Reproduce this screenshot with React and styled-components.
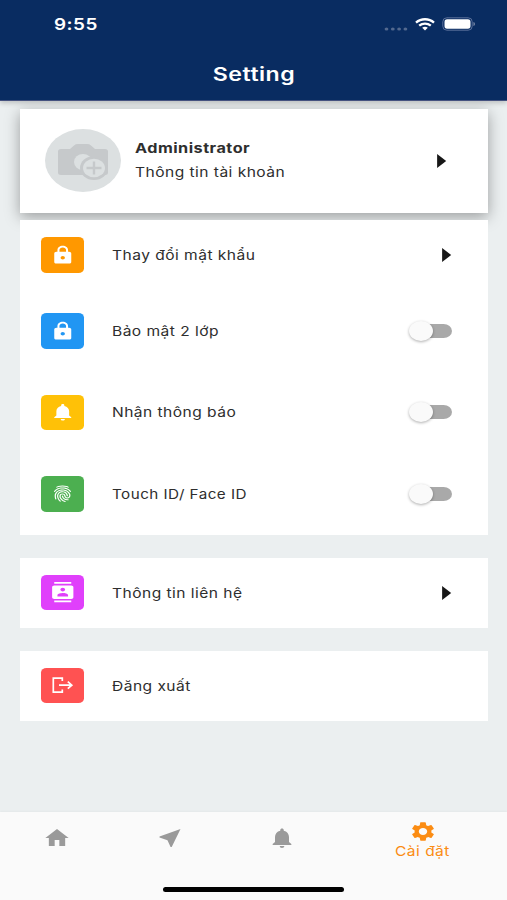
import React from 'react'
import styled, { createGlobalStyle } from 'styled-components'
import {
  MdLock,
  MdNotifications,
  MdContacts,
  MdHome,
  MdNearMe,
  MdSettings
} from 'react-icons/md'
import { IoFingerPrint } from 'react-icons/io5'

const GlobalStyle = createGlobalStyle`
  * { box-sizing: border-box; }
  body {
    margin: 0;
    background: #ebeff0;
    font-family: Inter, "Liberation Sans", sans-serif;
    color: #2e2e2e;
  }
`

const Screen = styled.div`
  width: 507px;
  height: 900px;
  display: flex;
  flex-direction: column;
  overflow: hidden;
`

const Header = styled.header`
  height: 101px;
  flex: none;
  background: #092c61;
  color: #fff;
  position: relative;
  z-index: 2;
  border-bottom: 1px solid #45527f;
  box-shadow: 0 2px 5px rgba(0, 0, 0, 0.2);
`

const StatusBar = styled.div`
  height: 48px;
  display: flex;
  align-items: center;
  justify-content: space-between;
  padding: 0 31px 0 53.5px;
`

const StatusIcons = styled.div`
  display: flex;
  align-items: center;
`

const TitleBar = styled.div`
  height: 52px;
  display: flex;
  align-items: center;
  justify-content: center;
`

const Label = styled.span`
  display: block;
  white-space: nowrap;
  font-size: ${props => props.$size || 13.3}px;
  font-weight: ${props => props.$weight || 400};
  line-height: 20px;
  letter-spacing: ${props => props.$spacing || 0.4}px;
  transform: scaleX(${props => props.$stretch || 1.17});
  transform-origin: ${props => props.$origin || 'left'} center;
`

const Content = styled.main`
  flex: 1;
  padding: 8px 19px 0 20px;
`

const Card = styled.section`
  background: #fff;
  margin-bottom: 23px;
  position: relative;
`

const ProfileCard = styled(Card)`
  height: 103.5px;
  display: flex;
  align-items: center;
  padding: 0 41px 0 25px;
  margin-bottom: 7.5px;
  box-shadow: 0 4px 14px rgba(0, 0, 0, 0.34);
`

const Avatar = styled.svg`
  width: 76px;
  height: 63px;
  flex: none;
`

const ProfileText = styled.div`
  flex: 1;
  margin-left: 14px;
  padding-bottom: 2px;
  display: flex;
  flex-direction: column;
  gap: 4px;
`

const Row = styled.div`
  height: ${props => props.$height || 70}px;
  display: flex;
  align-items: center;
  padding: 0 36.5px 0 21px;
`

const Tile = styled.div`
  width: 43px;
  height: 35.5px;
  border-radius: 5.5px / 4.5px;
  background: ${props => props.$color};
  color: #fff;
  display: flex;
  align-items: center;
  justify-content: center;
  margin-right: 28px;

  svg {
    width: ${props => (props.$small ? 21 : 25.5)}px;
    height: ${props => (props.$small ? 17.5 : 20.3)}px;
  }
`

const RowText = styled.div`
  flex: 1;
`

const Track = styled.div`
  width: 39px;
  height: 14px;
  border-radius: 8.5px / 7px;
  background: #a9a9a9;
  display: flex;
  align-items: center;
`

const Thumb = styled.div`
  width: 24px;
  height: 20px;
  flex: none;
  margin-left: -4px;
  border-radius: 50%;
  background: #fafafa;
  box-shadow: 0 1px 3px rgba(0, 0, 0, 0.32);
`

const Nav = styled.nav`
  height: 88px;
  flex: none;
  background: #fafafa;
  display: grid;
  grid-template-columns: 2fr 2fr 2fr 3fr;
  grid-template-rows: 75px 5px;
  padding-left: 1px;
  box-shadow: 0 -1px 2px rgba(0, 0, 0, 0.03);
`

const NavItem = styled.div`
  display: flex;
  flex-direction: column;
  align-items: center;
  padding-top: ${props => (props.$active ? 8 : 14)}px;
  color: ${props => (props.$active ? '#fb8c13' : '#9a9a9a')};

  svg {
    width: 28px;
    height: ${props => (props.$active ? 23 : 24)}px;
    flex: none;
  }

  span {
    margin-top: -2px;
  }
`

const HomeIndicator = styled.div`
  grid-column: 1 / -1;
  justify-self: center;
  width: 181px;
  height: 5px;
  border-radius: 3px;
  background: #000;
`

const Wifi = () => (
  <svg width="20" height="13" viewBox="0 0 20 13" fill="none" stroke="#fff" strokeWidth="2.3">
    <path d="M1 4.7C6 .1 14 .1 19 4.7" />
    <path d="M4.2 7.7c3.4-2.9 8.2-2.9 11.6 0" />
    <path d="M7.2 9.7c1.7-1.3 3.9-1.3 5.6 0L10 12.4z" fill="#fff" stroke="none" />
  </svg>
)

const Dots = () => (
  <svg width="24" height="4" viewBox="0 0 24 4" fill="#53698f">
    <ellipse cx="2.5" cy="2" rx="1.9" ry="1.6" />
    <ellipse cx="8.8" cy="2" rx="1.9" ry="1.6" />
    <ellipse cx="15.1" cy="2" rx="1.9" ry="1.6" />
    <ellipse cx="21.4" cy="2" rx="1.9" ry="1.6" />
  </svg>
)

const DotsBox = styled.div`
  display: flex;
  padding-top: 9px;
  margin-right: 7px;
`

const BatteryBox = styled.div`
  display: flex;
  margin-left: 7px;
`

const Battery = () => (
  <svg width="34" height="14" viewBox="0 0 34 14">
    <rect x=".8" y=".8" width="29.4" height="12.4" rx="4" fill="none" stroke="#5b709a" strokeWidth="1" />
    <rect x="2.5" y="2.3" width="26" height="9.4" rx="2.6" fill="#fff" />
    <path d="M31.5 5v4c1.8-.5 1.8-3.5 0-4z" fill="#8391ad" />
  </svg>
)

const Arrow = () => (
  <svg width="10" height="14" viewBox="0 0 10 14">
    <path d="M.1 0L9.2 7L.1 14z" fill="#171717" />
  </svg>
)

const Camera = () => (
  <Avatar viewBox="0 0 76 63">
    <ellipse cx="38" cy="31.5" rx="38" ry="31.5" fill="#dce0e1" />
    <path
      d="M16 20h9l4-3.6q1.5-1.4 4-1.4h9q2.5 0 4 1.4L50 20h10q3 0 3 2.5v21q0 2.5-3 2.5H16q-3 0-3-2.5v-21Q13 20 16 20z"
      fill="#c6c9cb"
    />
    <ellipse cx="38" cy="33" rx="9" ry="8" fill="#dce0e1" />
    <ellipse cx="49" cy="39" rx="14" ry="12" fill="#c6c9cb" />
    <ellipse cx="49" cy="39" rx="11" ry="9.3" fill="#dce0e1" />
    <path d="M41.5 39h15M49 32.5v13" stroke="#c6c9cb" strokeWidth="2.4" />
  </Avatar>
)

const Logout = () => (
  <svg viewBox="0 0 25.5 20.3" fill="none" stroke="#fff" strokeWidth="1.7">
    <path d="M12.3 6V3.2H3.3v14h9v-2.8" />
    <path d="M9 10.2h12.3M17.8 6.7l4 3.5-4 3.5" />
  </svg>
)

const Switch = () => (
  <Track>
    <Thumb />
  </Track>
)

const SettingRow = ({ color, icon, small, text, stretch, height, children }) => (
  <Row $height={height}>
    <Tile $color={color} $small={small}>{icon}</Tile>
    <RowText>
      <Label $stretch={stretch}>{text}</Label>
    </RowText>
    {children}
  </Row>
)

const App = () => {
  return (
    <Screen>
      <GlobalStyle />
      <Header>
        <StatusBar>
          <Label $size={16} $weight={600} $stretch={1.18}>9:55</Label>
          <StatusIcons>
            <DotsBox><Dots /></DotsBox>
            <Wifi />
            <BatteryBox><Battery /></BatteryBox>
          </StatusIcons>
        </StatusBar>
        <TitleBar>
          <Label $size={18.5} $weight={600} $stretch={1.25} $origin="center">Setting</Label>
        </TitleBar>
      </Header>

      <Content>
        <ProfileCard>
          <Camera />
          <ProfileText>
            <Label $weight={700} $stretch={1.22}>Administrator</Label>
            <Label $stretch={1.17}>Thông tin tài khoản</Label>
          </ProfileText>
          <Arrow />
        </ProfileCard>

        <Card>
          <SettingRow color="#ff9800" icon={<MdLock preserveAspectRatio="none" />} text="Thay đổi mật khẩu">
            <Arrow />
          </SettingRow>
          <SettingRow height={81.5} color="#2196f3" icon={<MdLock preserveAspectRatio="none" />} text="Bảo mật 2 lớp">
            <Switch />
          </SettingRow>
          <SettingRow height={81.5} color="#ffc107" icon={<MdNotifications preserveAspectRatio="none" />} text="Nhận thông báo">
            <Switch />
          </SettingRow>
          <SettingRow height={81.5} color="#4caf50" small icon={<IoFingerPrint preserveAspectRatio="none" />} text="Touch ID/ Face ID" stretch={1.145}>
            <Switch />
          </SettingRow>
        </Card>

        <Card>
          <SettingRow color="#e040fb" icon={<MdContacts preserveAspectRatio="none" />} text="Thông tin liên hệ">
            <Arrow />
          </SettingRow>
        </Card>

        <Card>
          <SettingRow color="#ff5252" icon={<Logout />} text="Đăng xuất" />
        </Card>
      </Content>

      <Nav>
        <NavItem><MdHome preserveAspectRatio="none" /></NavItem>
        <NavItem><MdNearMe preserveAspectRatio="none" /></NavItem>
        <NavItem><MdNotifications preserveAspectRatio="none" /></NavItem>
        <NavItem $active>
          <MdSettings preserveAspectRatio="none" />
          <Label $origin="center">Cài đặt</Label>
        </NavItem>
        <HomeIndicator />
      </Nav>
    </Screen>
  )
}

export default App
